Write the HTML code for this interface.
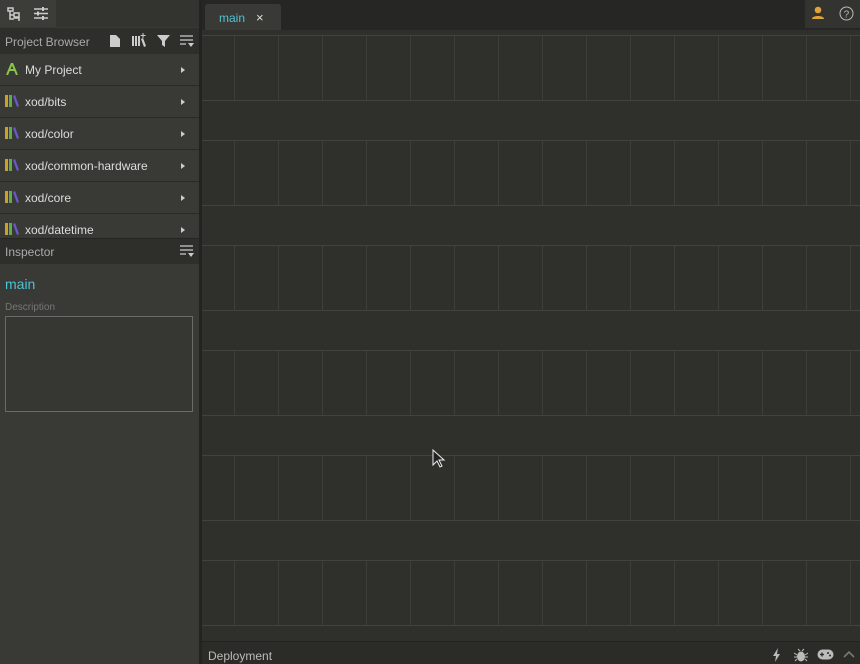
<!DOCTYPE html>
<html><head><style>
*{margin:0;padding:0;box-sizing:border-box}
body{width:860px;height:664px;overflow:hidden;background:#2e2e2b;font-family:"Liberation Sans",sans-serif;position:relative}
.abs{position:absolute}
.side{left:0;top:0;width:199px;height:664px;background:#393935}
.row{position:absolute;left:0;width:199px;height:32px;border-bottom:1px solid #2a2a27;color:#ddd;font-size:12px}
.row span{position:absolute;left:25px;top:9px}
.row i{position:absolute;left:181px;top:13px;width:0;height:0;border-left:4px solid #ccc;border-top:3px solid transparent;border-bottom:3px solid transparent}
.lib{position:absolute;left:5px;top:9px;width:14px;height:12px}
.hl{position:absolute;left:202px;width:658px;height:1px;background:#42423e}
.vl{position:absolute;width:1px;background:#3e3e3a}
</style></head><body>
<div class="abs side"></div>
<div class="abs" style="left:0;top:0;width:56px;height:27px;background:#3c3c38"></div>
<div class="abs" style="left:56px;top:0;width:143px;height:27px;background:#333330"></div>
<svg class="abs" style="left:7px;top:7px" width="14" height="14" viewBox="0 0 14 14" fill="none" stroke="#ccc" stroke-width="1.5"><path d="M1 1h5v3H1zM3 4v8h4M3 8h4M7 6h5v4H7zM7 11h5v3"/></svg>
<svg class="abs" style="left:34px;top:7px" width="14" height="13" viewBox="0 0 14 13" stroke="#ccc" stroke-width="1.5"><path d="M0 2h14M0 6.5h14M0 11h14"/><path d="M9 0v4M4 4.5v4M9 9v4" stroke-width="2"/></svg>
<div class="abs" style="left:0;top:28px;width:199px;height:26px;background:#2e2e2b"></div>
<div class="abs" style="left:5px;top:35px;color:#aaa;font-size:12px">Project Browser</div>
<svg class="abs" style="left:110px;top:35px" width="10" height="12"><path d="M0 0h6l4 4v8H0z" fill="#ccc"/></svg>
<svg class="abs" style="left:131px;top:33px" width="16" height="14"><path d="M1 3h2v10H1zM4 3h2v10H4zM7 3h2v10H7zM10 6l2-1 3 8-2 1z" fill="#ccc"/><path d="M12 0v5M9.5 2.5h5" stroke="#ccc"/></svg>
<svg class="abs" style="left:157px;top:35px" width="13" height="12"><path d="M0 0h13L8 6v6L5 10V6z" fill="#ccc"/></svg>
<svg class="abs" style="left:180px;top:35px" width="14" height="12"><path d="M0 1h13M0 5h13M0 9h6" stroke="#ccc" stroke-width="1.3"/><path d="M8 8h6l-3 4z" fill="#ccc"/></svg>
<div class="row" style="top:54px"><svg class="lib" viewBox="0 0 14 12"><path d="M7 0L2 12M7 0l5 12M4 7h6" stroke="#8bc34a" stroke-width="2" fill="none"/></svg><span>My Project</span><i></i></div>
<div class="row" style="top:86px"><svg class="lib" viewBox="0 0 14 12"><rect x="0" width="3" height="12" fill="#c9a227"/><rect x="4" width="3" height="12" fill="#5cae4a"/><path d="M8 1l2-1 4 11-2 1z" fill="#6a5acd"/></svg><span>xod/bits</span><i></i></div>
<div class="row" style="top:118px"><svg class="lib" viewBox="0 0 14 12"><rect x="0" width="3" height="12" fill="#c9a227"/><rect x="4" width="3" height="12" fill="#5cae4a"/><path d="M8 1l2-1 4 11-2 1z" fill="#6a5acd"/></svg><span>xod/color</span><i></i></div>
<div class="row" style="top:150px"><svg class="lib" viewBox="0 0 14 12"><rect x="0" width="3" height="12" fill="#c9a227"/><rect x="4" width="3" height="12" fill="#5cae4a"/><path d="M8 1l2-1 4 11-2 1z" fill="#6a5acd"/></svg><span>xod/common-hardware</span><i></i></div>
<div class="row" style="top:182px"><svg class="lib" viewBox="0 0 14 12"><rect x="0" width="3" height="12" fill="#c9a227"/><rect x="4" width="3" height="12" fill="#5cae4a"/><path d="M8 1l2-1 4 11-2 1z" fill="#6a5acd"/></svg><span>xod/core</span><i></i></div>
<div class="row" style="top:214px;height:25px;overflow:hidden"><svg class="lib" viewBox="0 0 14 12"><rect x="0" width="3" height="12" fill="#c9a227"/><rect x="4" width="3" height="12" fill="#5cae4a"/><path d="M8 1l2-1 4 11-2 1z" fill="#6a5acd"/></svg><span>xod/datetime</span><i></i></div>
<div class="abs" style="left:0;top:238px;width:199px;height:26px;background:#2e2e2b;border-top:1px solid #252523"></div>
<div class="abs" style="left:5px;top:245px;color:#aaa;font-size:12px">Inspector</div>
<svg class="abs" style="left:180px;top:245px" width="14" height="12"><path d="M0 1h13M0 5h13M0 9h6" stroke="#ccc" stroke-width="1.3"/><path d="M8 8h6l-3 4z" fill="#ccc"/></svg>
<div class="abs" style="left:5px;top:276px;color:#4dc3d6;font-size:14px">main</div>
<div class="abs" style="left:5px;top:302px;color:#777;font-size:10px">Description</div>
<div class="abs" style="left:5px;top:316px;width:188px;height:96px;border:1px solid #6a6a66;background:#363632"></div>
<div class="abs" style="left:199px;top:0;width:3px;height:664px;background:#232321"></div>
<div class="abs" style="left:202px;top:0;width:658px;height:30px;background:#262624"></div>
<div class="abs" style="left:205px;top:4px;width:76px;height:26px;background:#393935;border-radius:3px 3px 0 0"></div>
<div class="abs" style="left:219px;top:11px;color:#4dc3d6;font-size:12px">main</div>
<div class="abs" style="left:256px;top:10px;color:#ddd;font-size:13px">×</div>
<div class="abs" style="left:805px;top:0;width:55px;height:28px;background:#333330"></div>
<svg class="abs" style="left:811px;top:6px" width="14" height="14"><circle cx="7" cy="4" r="3.3" fill="#e0a33a"/><path d="M1 13c0-4 12-4 12 0z" fill="#e0a33a"/></svg>
<svg class="abs" style="left:839px;top:6px" width="15" height="15"><circle cx="7.5" cy="7.5" r="6.5" fill="none" stroke="#bbb"/><text x="4.6" y="11.5" fill="#bbb" font-size="10" font-family="Liberation Sans">?</text></svg>
<div class="abs" style="left:202px;top:30px;width:658px;height:611px;background:#2f2f2b"></div>
<div class="hl" style="top:35px"></div><div class="hl" style="top:100px"></div><div class="hl" style="top:140px"></div><div class="hl" style="top:205px"></div><div class="hl" style="top:245px"></div><div class="hl" style="top:310px"></div><div class="hl" style="top:350px"></div><div class="hl" style="top:415px"></div><div class="hl" style="top:455px"></div><div class="hl" style="top:520px"></div><div class="hl" style="top:560px"></div><div class="hl" style="top:625px"></div>
<svg class="abs" style="left:202px;top:0" width="658" height="641"><g stroke="#3e3e3a" stroke-width="1">
<path d="M32.5 36v64M76.5 36v64M120.5 36v64M164.5 36v64M208.5 36v64M252.5 36v64M296.5 36v64M340.5 36v64M384.5 36v64M428.5 36v64M472.5 36v64M516.5 36v64M560.5 36v64M604.5 36v64M648.5 36v64" id="v"/>
<use href="#v" y="105"/><use href="#v" y="210"/><use href="#v" y="315"/><use href="#v" y="420"/><use href="#v" y="525"/>
</g></svg>
<svg class="abs" style="left:432px;top:449px" width="14" height="20"><path d="M1 1v15l4-4 3 6 2-1-3-6h5z" fill="#222" stroke="#eee"/></svg>
<div class="abs" style="left:202px;top:641px;width:658px;height:23px;background:#2b2b28;border-top:1px solid #232321"></div>
<div class="abs" style="left:208px;top:649px;color:#bbb;font-size:12px">Deployment</div>
<svg class="abs" style="left:772px;top:648px" width="10" height="14"><path d="M6 0L1 8h3l-1 6 5-8H5z" fill="#bbb"/></svg>
<svg class="abs" style="left:794px;top:648px" width="14" height="14"><ellipse cx="7" cy="8.5" rx="4" ry="5" fill="#bbb"/><path d="M0 5l3 2M14 5l-3 2M0 9h3M14 9h-3M1 13l2-2M13 13l-2-2M4 1l2 2M10 1L8 3" stroke="#bbb"/></svg>
<svg class="abs" style="left:817px;top:649px" width="17" height="11"><rect x="0.5" y="0.5" width="16" height="10" rx="5" fill="#bbb"/><path d="M3 5.5h4M5 3.5v4" stroke="#2b2b28" stroke-width="1.3"/><circle cx="11" cy="4" r="1" fill="#2b2b28"/><circle cx="13" cy="6.5" r="1" fill="#2b2b28"/></svg>
<svg class="abs" style="left:843px;top:650px" width="12" height="8"><path d="M1 7l5-5 5 5" stroke="#777" stroke-width="1.6" fill="none"/></svg>
</body></html>
